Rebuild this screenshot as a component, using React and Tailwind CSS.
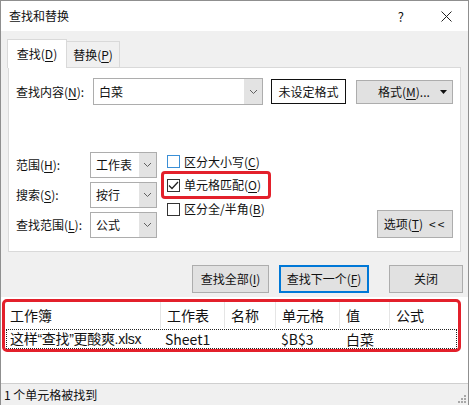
const K = ({ children }) => (
  <span className="underline underline-offset-[2px] decoration-1">{children}</span>
);

function Chevron() {
  return (
    <svg width="9" height="6" viewBox="0 0 9 6" fill="none">
      <path d="M1 1 L4.5 4.5 L8 1" stroke="#606060" strokeWidth="1" />
    </svg>
  );
}

function Select({ value, h = "h-[26px]" }) {
  return (
    <div className={`flex w-[67px] ${h} border border-[#adadad] bg-white`}>
      <div className="flex flex-1 items-center pl-[5px] text-[12px] leading-none">{value}</div>
      <div className="flex w-[17px] items-center justify-center bg-[#e3e3e3]">
        <Chevron />
      </div>
    </div>
  );
}

function Check({ label, checked, blue }) {
  return (
    <div className="flex h-full items-center pl-[6px]">
      <div
        className={`flex h-[13px] w-[13px] items-center justify-center border bg-white ${
          blue ? "border-[#3b8fd6]" : "border-[#333333]"
        }`}
      >
        {checked && (
          <svg width="11" height="9" viewBox="0 0 11 9" fill="none">
            <path d="M1 4.5 L4 7.5 L10 1" stroke="#222" strokeWidth="1.3" />
          </svg>
        )}
      </div>
      <span className="ml-[4px] text-[12px] leading-none">{label}</span>
    </div>
  );
}

function Button({ children, w, primary }) {
  return (
    <div
      className={`flex h-[28px] ${w} items-center justify-center bg-[#e1e1e1] text-[12px] leading-none ${
        primary ? "border-2 border-[#0078d7]" : "border border-[#adadad]"
      }`}
    >
      {children}
    </div>
  );
}

const cols = [
  { name: "工作表", w: "w-[64px]" },
  { name: "名称", w: "w-[51px]" },
  { name: "单元格", w: "w-[64px]" },
  { name: "值", w: "w-[50px]" },
];

export default function App() {
  return (
    <div className="h-[405px] w-[470px] bg-white font-['Noto_Sans_CJK_SC',sans-serif] text-[#111]">
      <div className="flex h-full w-[469px] flex-col border-x border-t border-[#8f8f8f]">
        {/* title bar */}
        <div className="flex h-[30px] shrink-0 items-center bg-white pl-[8px]">
          <span className="text-[12px] leading-none">查找和替换</span>
          <span className="ml-auto mr-[37px] text-[13px] leading-none">?</span>
          <svg width="11" height="11" viewBox="0 0 11 11" className="mr-[16px]">
            <path d="M0.5 0.5 L10.5 10.5 M10.5 0.5 L0.5 10.5" stroke="#222" strokeWidth="1" />
          </svg>
        </div>

        <div className="flex flex-1 flex-col bg-[#f0f0f0]">
          {/* tabs */}
          <div className="flex pl-[6px] pt-[8px]">
            <div className="relative z-10 -mb-px flex h-[29px] w-[60px] items-center justify-center border border-b-0 border-[#d9d9d9] bg-white text-[12px] leading-none">
              查找(<K>D</K>)
            </div>
            <div className="mt-[2px] flex h-[26px] w-[53px] items-center justify-center border border-l-0 border-b-0 border-[#d9d9d9] bg-[#f0f0f0] text-[12px] leading-none">
              替换(<K>P</K>)
            </div>
          </div>

          {/* find panel */}
          <div className="ml-[7px] h-[185px] w-[453px] border border-[#d9d9d9] bg-white pl-[7px] pr-[7px] pt-[10px]">
            <div className="flex h-[27px] items-center">
              <span className="w-[77px] text-[12px] leading-none">
                查找内容(<K>N</K>):
              </span>
              <div className="flex h-[27px] w-[170px] border border-[#adadad] bg-white">
                <div className="flex flex-1 items-center pl-[5px] text-[12px] leading-none">白菜</div>
                <div className="flex w-[18px] items-center justify-center bg-[#e3e3e3]">
                  <Chevron />
                </div>
              </div>
              <div className="ml-[8px] flex h-[25px] w-[75px] items-center justify-center border border-[#111] text-[12px] leading-none">
                未设定格式
              </div>
              <div className="ml-[10px] flex h-[24px] w-[97px] items-center border border-[#adadad] bg-[#e1e1e1] pl-[21px] pr-[5px] text-[12px] leading-none">
                <span>
                  格式(<K>M</K>)...
                </span>
                <svg width="7" height="4" viewBox="0 0 7 4" className="ml-auto">
                  <path d="M0 0 H7 L3.5 4 Z" fill="#111" />
                </svg>
              </div>
            </div>

            <div className="mt-[47px] flex">
              <div className="flex flex-col gap-[4px]">
                <div className="flex items-center">
                  <span className="w-[74px] text-[12px] leading-none">
                    范围(<K>H</K>):
                  </span>
                  <Select value="工作表" />
                </div>
                <div className="flex items-center">
                  <span className="w-[74px] text-[12px] leading-none">
                    搜索(<K>S</K>):
                  </span>
                  <Select value="按行" />
                </div>
                <div className="flex items-center">
                  <span className="w-[74px] text-[12px] leading-none">
                    查找范围(<K>L</K>):
                  </span>
                  <Select value="公式" />
                </div>
              </div>

              <div className="ml-[4px] flex w-[110px] flex-col">
                <div className="h-[19px]">
                  <Check label={<>区分大小写(<K>C</K>)</>} blue />
                </div>
                <div className="relative h-[28px]">
                  <Check label={<>单元格匹配(<K>O</K>)</>} checked />
                  <div className="pointer-events-none absolute inset-0 rounded-[4px] border-[3px] border-[#e3202b]" />
                </div>
                <div className="h-[20px]">
                  <Check label={<>区分全/半角(<K>B</K>)</>} />
                </div>
              </div>

              <div className="ml-auto flex self-end">
                <div className="flex h-[28px] w-[76px] items-center justify-center border border-[#adadad] bg-[#e1e1e1] text-[12px] leading-none">
                  选项(<K>T</K>)<span className="ml-[6px] tracking-[2px]">&lt;&lt;</span>
                </div>
              </div>
            </div>
          </div>

          {/* action buttons */}
          <div className="mt-[13px] flex justify-end pr-[5px]">
            <Button w="w-[77px]">
              查找全部(<K>I</K>)
            </Button>
            <div className="ml-[10px]">
              <Button w="w-[90px]" primary>
                查找下一个(<K>F</K>)
              </Button>
            </div>
            <div className="ml-[20px]">
              <Button w="w-[74px]">关闭</Button>
            </div>
          </div>

          {/* results list */}
          <div className="relative mt-[4px] h-[86px] bg-white pt-[5px] text-[14px] leading-none">
            <div className="flex h-[26px] items-center">
              <div className="flex h-full w-[159px] items-center pl-[9px]">工作簿</div>
              {cols.map((c) => (
                <div key={c.name} className={`flex h-full ${c.w} items-center border-l border-[#e5e5e5] pl-[6px]`}>
                  {c.name}
                </div>
              ))}
              <div className="flex h-full flex-1 items-center border-l border-[#e5e5e5] pl-[6px]">公式</div>
            </div>
            <div className="ml-[5px] mt-px flex h-[20px] w-[451px] items-center whitespace-nowrap border border-dotted border-[#222]">
              <div className="w-[153px] overflow-hidden pl-[3px] font-['Liberation_Sans','Noto_Sans_CJK_SC',sans-serif] tracking-[-0.3px]">
                这样“查找”更酸爽.xlsx
              </div>
              <div className="w-[115px] pl-[5px]">Sheet1</div>
              <div className="w-[64px] pl-[6px]">$B$3</div>
              <div className="pl-[7px]">白菜</div>
            </div>
            <div className="pointer-events-none absolute left-[1px] top-[2px] h-[53px] w-[459px] rounded-[5px] border-[3px] border-[#e3202b]" />
          </div>

          {/* status bar */}
          <div className="relative flex h-[22px] items-center border-t border-[#cfcfcf] bg-[#f0f0f0] pl-[3px]">
            <span className="text-[12px] leading-none">1 个单元格被找到</span>
            <div className="absolute bottom-[2px] right-[2px] grid grid-cols-3 gap-[1px]">
              <span className="h-[2px] w-[2px]" />
              <span className="h-[2px] w-[2px]" />
              <span className="h-[2px] w-[2px] bg-[#a8a8a8]" />
              <span className="h-[2px] w-[2px]" />
              <span className="h-[2px] w-[2px] bg-[#a8a8a8]" />
              <span className="h-[2px] w-[2px] bg-[#a8a8a8]" />
              <span className="h-[2px] w-[2px] bg-[#a8a8a8]" />
              <span className="h-[2px] w-[2px] bg-[#a8a8a8]" />
              <span className="h-[2px] w-[2px] bg-[#a8a8a8]" />
            </div>
          </div>
        </div>
      </div>
    </div>
  );
}
